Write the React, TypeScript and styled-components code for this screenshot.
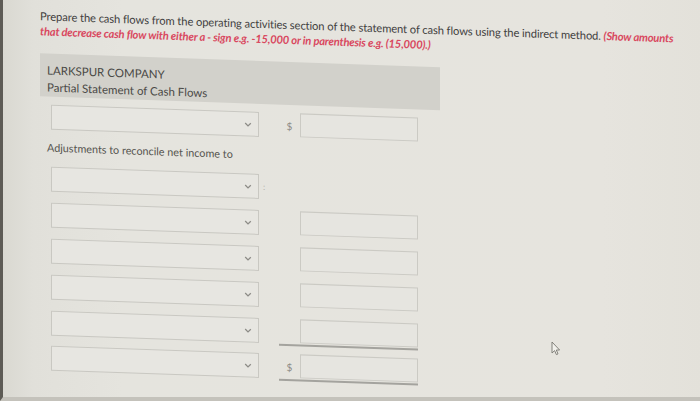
import React from "react";
import styled, { createGlobalStyle } from "styled-components";

const GlobalStyle = createGlobalStyle`
  html, body {
    margin: 0;
    padding: 0;
  }
  body {
    background: #e4e3dd;
    font-family: Lato, "Open Sans", "Liberation Sans", sans-serif;
  }
`;

const Screen = styled.div`
  position: relative;
  width: 700px;
  height: 401px;
  box-sizing: border-box;
  overflow: hidden;
  border-left: 3px solid #5d5b55;
  border-bottom: 4px solid #c4c2bb;
  background: linear-gradient(
    90deg,
    #d9d8d1 0px,
    #e1e0da 30px,
    #e5e4de 120px,
    #e6e4de 600px,
    #e3e1da 700px
  );
`;

// the photo is taken at a slight tilt
const Sheet = styled.div`
  transform: skewY(2deg);
  transform-origin: 0 0;
  padding: 8px 0 0 37px;
`;

const Prompt = styled.p`
  margin: 0;
  white-space: nowrap;
  font-size: 11.2px;
  line-height: 14.5px;
  color: #42413e;
  letter-spacing: -0.1px;
`;

const Note = styled.em`
  color: #d9485f;
  font-weight: 700;
  font-style: italic;
  letter-spacing: -0.2px;
`;

const Heading = styled.div`
  width: 400px;
  box-sizing: border-box;
  margin-top: 15px;
  padding: 9px 7px 1px;
  background: #d2d1cb;
  color: #4a4946;
  font-size: 11.5px;
  line-height: 16.5px;
`;

const Form = styled.div`
  display: flex;
  flex-direction: column;
  margin-top: 8px;
  padding-left: 11px;
`;

const Row = styled.div<{ $gap: number }>`
  display: grid;
  grid-template-columns: 208px 20px 21px 118px;
  align-items: start;
  height: 25px;
  margin-top: ${(p) => p.$gap}px;
`;

const SelectBox = styled.div`
  display: flex;
  align-items: center;
  justify-content: flex-end;
  height: 25px;
  box-sizing: border-box;
  padding-right: 6px;
  border: 1px solid #c9c8c2;
  background: #e7e6e1;
`;

const Sign = styled.span`
  align-self: center;
  text-align: center;
  font-size: 10px;
  color: #8b8a85;
`;

const Colon = styled.span`
  align-self: center;
  padding-left: 4px;
  font-size: 9px;
  color: #b5b4ae;
`;

const Amount = styled.input`
  grid-column: 4;
  width: 118px;
  height: 24px;
  box-sizing: border-box;
  margin: 0;
  border: 1px solid #cbcac4;
  background: #e6e5e0;
  outline: none;
`;

const Label = styled.div`
  margin: 11px 0 0 -4px;
  font-size: 10.8px;
  line-height: 14px;
  color: #55544f;
`;

const RuleRow = styled.div<{ $gap: number }>`
  display: grid;
  grid-template-columns: 208px 20px 21px 118px;
  margin-top: ${(p) => p.$gap}px;
`;

const Rule = styled.div`
  grid-column: 3 / 5;
  height: 2px;
  background: #a4a39e;
`;

const Pointer = styled.svg`
  position: absolute;
  left: 548px;
  top: 341px;
`;

const Chevron = () => (
  <svg width="8" height="6" viewBox="0 0 8 6">
    <polyline points="1.2,1.5 4,4.3 6.8,1.5" fill="none" stroke="#8d8c87" strokeWidth="1.3" />
  </svg>
);

type Line = { sign?: string; amount?: boolean; colon?: boolean; gap: number };

const Entry = ({ sign, amount = true, colon, gap }: Line) => (
  <Row $gap={gap}>
    <SelectBox>
      <Chevron />
    </SelectBox>
    {colon ? <Colon>:</Colon> : <span />}
    {sign ? <Sign>{sign}</Sign> : <span />}
    {amount && <Amount type="text" />}
  </Row>
);

export default function App() {
  return (
    <>
      <GlobalStyle />
      <Screen>
        <Sheet>
          <Prompt>
            Prepare the cash flows from the operating activities section of the statement of cash flows using the indirect method.{" "}
            <Note>
              (Show amounts
              <br />
              that decrease cash flow with either a - sign e.g. -15,000 or in parenthesis e.g. (15,000).)
            </Note>
          </Prompt>
          <Heading>
            LARKSPUR COMPANY
            <br />
            Partial Statement of Cash Flows
          </Heading>
          <Form>
            <Entry sign="$" gap={0} />
            <Label>Adjustments to reconcile net income to</Label>
            <Entry amount={false} colon gap={12} />
            <Entry gap={11} />
            <Entry gap={11} />
            <Entry gap={11} />
            <Entry gap={11} />
            <RuleRow $gap={0}>
              <Rule />
            </RuleRow>
            <Entry sign="$" gap={8} />
            <RuleRow $gap={0}>
              <Rule />
            </RuleRow>
          </Form>
        </Sheet>
        <Pointer width="10" height="15" viewBox="0 0 10 15">
          <path d="M1 1 L1 12 L3.6 9.6 L5.4 13.6 L7 12.9 L5.3 9 L8.6 9 Z" fill="#f2f1ec" stroke="#77766f" strokeWidth="0.9" />
        </Pointer>
      </Screen>
    </>
  );
}
